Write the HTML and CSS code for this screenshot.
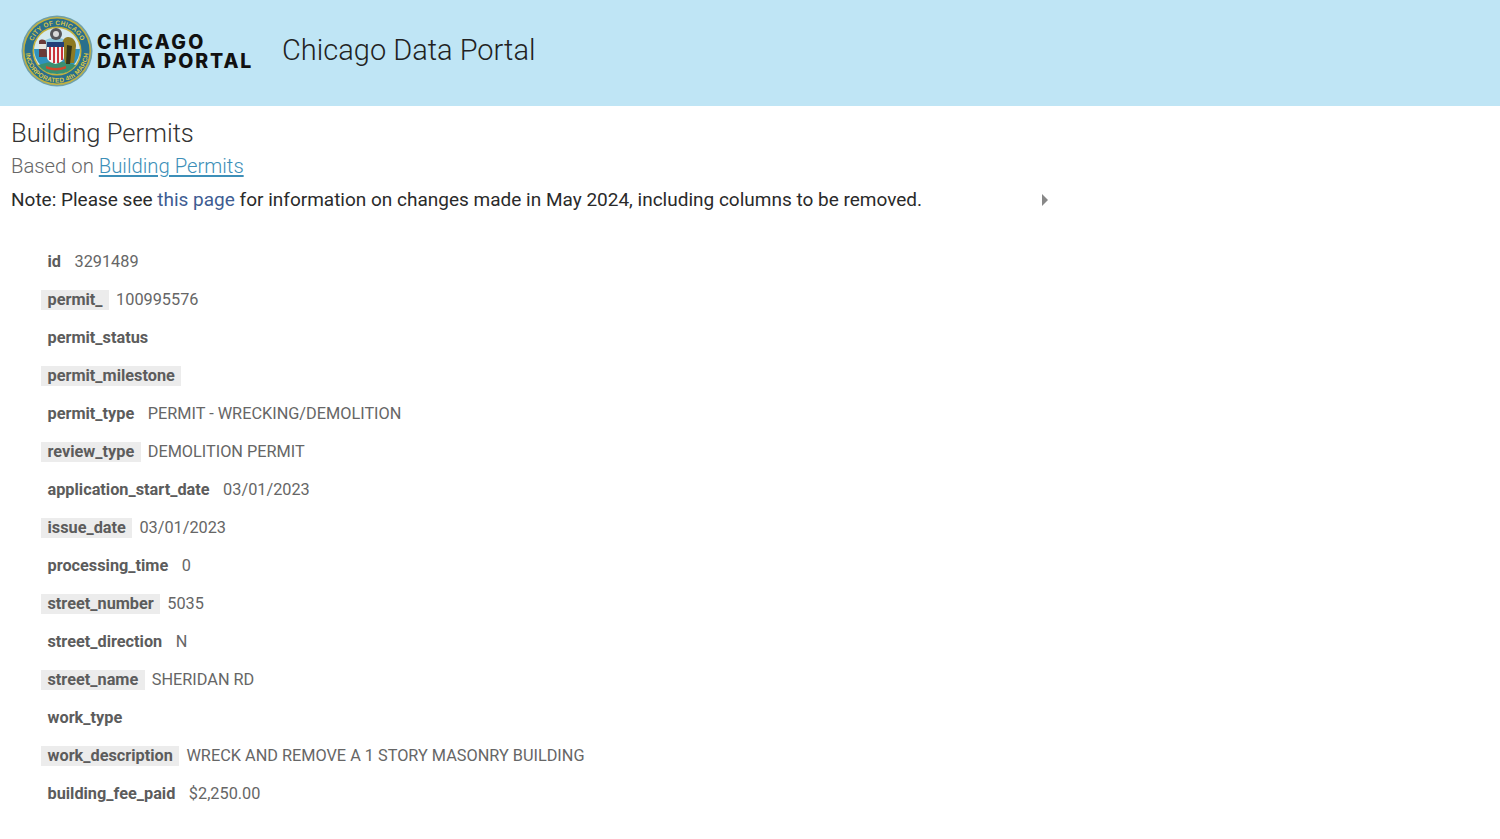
FILE: index.html
```html
<!DOCTYPE html>
<html lang="en">
<head>
  <meta charset="UTF-8">
  <title>Building Permits</title>
  <link rel="stylesheet" href="styles.css">
</head>
<body>

<header class="site-header">
  <div class="logo">
    <svg class="seal" width="72" height="72" viewBox="0 0 72 72">
      <defs>
        <path id="sealTop" d="M10 36a26 26 0 0 1 52 0"/>
        <path id="sealBottom" d="M4.500 36a31.500 31.500 0 0 0 63 0"/>
      </defs>
      <circle cx="36" cy="36" r="35.500" fill="#6f9fa8"/>
      <circle cx="36" cy="36" r="34" fill="#c4b23e"/>
      <circle cx="36" cy="36" r="32.500" fill="#2a6f8c"/>
      <text class="seal-text"><textPath href="#sealTop" startOffset="50%" text-anchor="middle">CITY OF CHICAGO</textPath></text>
      <text class="seal-text"><textPath href="#sealBottom" startOffset="50%" text-anchor="middle">INCORPORATED 4th MARCH</textPath></text>
      <circle cx="36" cy="36" r="24.500" fill="#c4b23e"/>
      <circle cx="36" cy="36" r="23" fill="#d5e9ef"/>
      <path d="M13 34h46a23 23 0 0 1-46 0z" fill="#2f93bd"/>
      <path d="M17 50q19-7 38 0q-7 9-19 9t-19-9z" fill="#3a8f70"/>
      <path d="M22 26q14-8 28 2v7H22z" fill="#8cc7de"/>
      <circle cx="35" cy="19" r="6" fill="#55565a"/>
      <circle cx="35" cy="19" r="3" fill="#d9d9d9"/>
      <path d="M18 26c2-2 6-2 7 1l1 15h-8z" fill="#6c3a3a"/>
      <path d="M18 29h7v5h-7z" fill="#e8e4e0"/>
      <path d="M47 22c5 0 8 4 8 9l-2 17h-9l-3-16c0-6 2-10 6-10z" fill="#8d7a22"/>
      <path d="M46 30l5 1-2 18h-4z" fill="#33351a"/>
      <path d="M26 27h17v5H26z" fill="#223f78"/>
      <path d="M26 32h17v10c0 4-5 6-8.500 7-3.500-1-8.500-3-8.500-7z" fill="#f4f4f4"/>
      <path d="M28 32h2v13h-2zM32 32h2v16h-2zM36 32h2v16h-2zM40 32h2v13h-2z" fill="#c8343c"/>
      <path d="M25 51q10 4 20 0v2.500q-10 4-20 0z" fill="#cf4a2c"/>
    </svg>
    <div class="logo-text">
      <div class="logo-top">CHICAGO</div>
      <div class="logo-bottom">DATA PORTAL</div>
    </div>
  </div>
  <div class="site-title">Chicago Data Portal</div>
</header>

<main class="content">
  <h1 class="page-title">Building Permits</h1>
  <div class="based-on">Based on <a href="#">Building Permits</a></div>
  <div class="note-row">
    <p class="note">Note: Please see <a href="#">this page</a> for information on changes made in May 2024, including columns to be removed.</p>
    <span class="arrow"></span>
  </div>

  <dl class="fields">
    <div class="field"><dt>id</dt><dd>3291489</dd></div>
    <div class="field"><dt>permit_</dt><dd>100995576</dd></div>
    <div class="field"><dt>permit_status</dt><dd></dd></div>
    <div class="field"><dt>permit_milestone</dt><dd></dd></div>
    <div class="field"><dt>permit_type</dt><dd>PERMIT - WRECKING/DEMOLITION</dd></div>
    <div class="field"><dt>review_type</dt><dd>DEMOLITION PERMIT</dd></div>
    <div class="field"><dt>application_start_date</dt><dd>03/01/2023</dd></div>
    <div class="field"><dt>issue_date</dt><dd>03/01/2023</dd></div>
    <div class="field"><dt>processing_time</dt><dd>0</dd></div>
    <div class="field"><dt>street_number</dt><dd>5035</dd></div>
    <div class="field"><dt>street_direction</dt><dd>N</dd></div>
    <div class="field"><dt>street_name</dt><dd>SHERIDAN RD</dd></div>
    <div class="field"><dt>work_type</dt><dd></dd></div>
    <div class="field"><dt>work_description</dt><dd>WRECK AND REMOVE A 1 STORY MASONRY BUILDING</dd></div>
    <div class="field"><dt>building_fee_paid</dt><dd>$2,250.00</dd></div>
  </dl>
</main>

</body>
</html>
```

FILE: styles.css
```css
html, body {
  height: 100%;
  overflow: hidden;
}

body {
  margin: 0;
  font-family: Roboto, "Liberation Sans", sans-serif;
  background-color: #ffffff;
  color: #333333;
}

.site-header {
  display: flex;
  align-items: center;
  height: 106px;
  padding: 0 0 5px 21px;
  box-sizing: border-box;
  background-color: #bfe5f5;
}

.logo {
  display: flex;
  align-items: center;
  width: 261px;
}

.seal {
  flex: none;
}

.seal-text {
  font-family: "Liberation Sans", sans-serif;
  font-size: 6.500px;
  font-weight: 700;
  letter-spacing: 0.2px;
  fill: #d8c64a;
}

.logo-text {
  margin: 3px 0 0 4px;
  font-family: Inter, sans-serif;
  font-size: 19.500px;
  font-weight: 800;
  line-height: 19px;
  color: #111111;
  white-space: nowrap;
}

.logo-top {
  letter-spacing: 2.300px;
}

.logo-bottom {
  letter-spacing: 1.900px;
}

.site-title {
  margin-top: -1px;
  font-size: 29px;
  font-weight: 300;
  color: #222222;
}

.content {
  padding: 11px 0 0 11px;
}

.page-title {
  margin: 0;
  font-size: 25.600px;
  font-weight: 300;
  line-height: 32px;
  color: #333333;
}

.based-on {
  margin-top: 5px;
  font-size: 20.300px;
  font-weight: 300;
  line-height: 24px;
  color: #666666;
}

.based-on a {
  color: #3d8fb8;
}

.note-row {
  display: flex;
  align-items: center;
  margin-top: 10px;
  width: 1037px;
}

.note {
  flex: 1;
  margin: 0;
  font-size: 19px;
  line-height: 24px;
  color: #2a2a2a;
}

.note a {
  color: #3e5c92;
  text-decoration: none;
}

.arrow {
  width: 0;
  height: 0;
  border-top: 6px solid transparent;
  border-bottom: 6px solid transparent;
  border-left: 6px solid #888888;
}

.fields {
  margin: 40px 0 0 30px;
  font-size: 16.300px;
  line-height: 20px;
}

.field {
  display: flex;
  height: 38px;
  color: #666666;
}

.field dt {
  padding: 0 6.500px;
  height: 20px;
  font-weight: 700;
  color: #5c5c5c;
}

.field dd {
  margin: 0 0 0 7px;
}

.field:nth-child(even) dt {
  background-color: #ececec;
}
```
